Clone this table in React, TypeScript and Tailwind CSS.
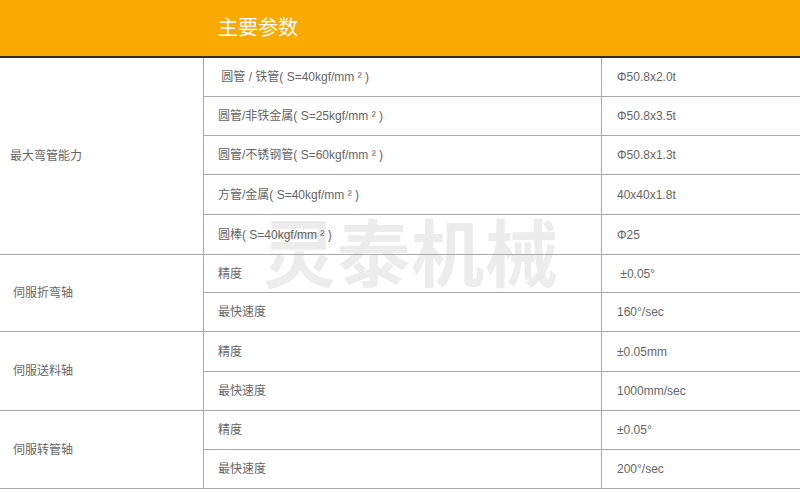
import React from 'react';

interface SpecRow {
  label: string;
  value: string;
  h: string;
}

interface SpecGroup {
  name: string;
  pad: string;
  rows: SpecRow[];
}

const groups: SpecGroup[] = [
  {
    name: '最大弯管能力',
    pad: 'pl-[10px]',
    rows: [
      { label: '\u00a0圆管 / 铁管( S=40kgf/mm ² )', value: 'Φ50.8x2.0t', h: 'h-[39px]' },
      { label: '圆管/非铁金属( S=25kgf/mm ² )', value: 'Φ50.8x3.5t', h: 'h-[39px]' },
      { label: '圆管/不锈钢管( S=60kgf/mm ² )', value: 'Φ50.8x1.3t', h: 'h-[39px]' },
      { label: '方管/金属( S=40kgf/mm ² )', value: '40x40x1.8t', h: 'h-[40px]' },
      { label: '圆棒( S=40kgf/mm ² )', value: 'Φ25', h: 'h-[39px]' },
    ],
  },
  {
    name: '伺服折弯轴',
    pad: 'pl-[13px]',
    rows: [
      { label: '精度', value: '\u00a0±0.05°', h: 'h-[38px]' },
      { label: '最快速度', value: '160°/sec', h: 'h-[38px]' },
    ],
  },
  {
    name: '伺服送料轴',
    pad: 'pl-[13px]',
    rows: [
      { label: '精度', value: '±0.05mm', h: 'h-[40px]' },
      { label: '最快速度', value: '1000mm/sec', h: 'h-[38px]' },
    ],
  },
  {
    name: '伺服转管轴',
    pad: 'pl-[13px]',
    rows: [
      { label: '精度', value: '±0.05°', h: 'h-[39px]' },
      { label: '最快速度', value: '200°/sec', h: 'h-[38px]' },
    ],
  },
];

const font = { fontFamily: '"Liberation Sans", "Noto Sans CJK SC", sans-serif' };

export default function App() {
  return (
    <div className="relative w-[800px] h-[493px] bg-white overflow-hidden" style={font}>
      {/* header bar */}
      <div className="h-[58px] bg-[#f9a900] border-b-2 border-[#2f2f2f] flex items-center pl-[218px]">
        <span className="text-white text-[20px] leading-none">主要参数</span>
      </div>

      {/* watermark */}
      <div className="absolute left-[263px] top-[219px] text-[73px] font-bold text-[#ececec] leading-none tracking-[1px] select-none">
        灵泰机械
      </div>

      <div className="relative z-10 text-[12px] text-[#666]">
        {groups.map((g) => (
          <div key={g.name} className="flex border-b border-[#a8a8a8]">
            <div className={`w-[204px] shrink-0 border-r border-[#a8a8a8] flex items-center ${g.pad}`}>
              {g.name}
            </div>
            <div className="flex-1 flex flex-col">
              {g.rows.map((r, i) => (
                <div
                  key={r.label + i}
                  className={`flex ${r.h} ${i < g.rows.length - 1 ? 'border-b border-[#a8a8a8]' : ''}`}
                >
                  <div className="w-[398px] shrink-0 border-r border-[#a8a8a8] flex items-center pl-[14px]">
                    {r.label}
                  </div>
                  <div className="flex-1 flex items-center pl-[15px]">{r.value}</div>
                </div>
              ))}
            </div>
          </div>
        ))}
      </div>
    </div>
  );
}
